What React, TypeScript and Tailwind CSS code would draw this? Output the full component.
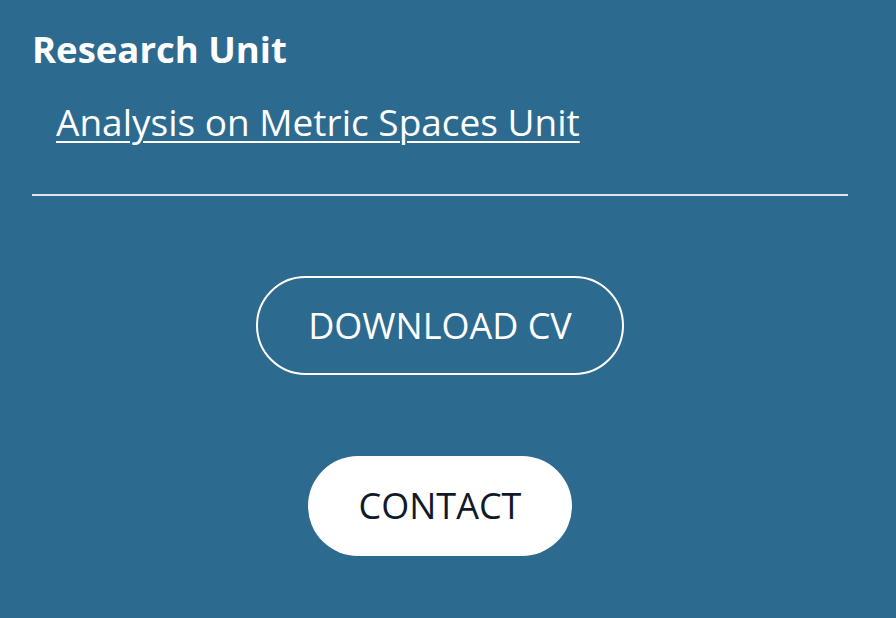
import React from 'react';

export default function App() {
  return (
    <div className="min-h-screen w-full bg-[#2d6a8f] text-white font-['Open_Sans',_'Noto_Sans',_sans-serif]">
      <div className="pl-[32px] pr-[48px] pt-[29px]">
        {/* Research unit */}
        <h3 className="text-[36.5px] leading-[40px] font-bold">Research Unit</h3>
        <div className="mt-[29px] pl-[24px]">
          <a href="#" className="text-[37px] leading-[48px] underline underline-offset-[5px] decoration-[2px]">
            Analysis on Metric Spaces Unit
          </a>
        </div>
        <hr className="mt-[48px] border-0 h-[2px] bg-[#dfe4e8]" />

        {/* Actions */}
        <div className="mt-[80px] flex flex-col items-center gap-[81px]">
          <a
            href="#"
            className="h-[99px] flex items-center px-[50px] rounded-full border-2 border-white text-[36px] leading-[44px] text-white"
          >
            DOWNLOAD CV
          </a>
          <a
            href="#"
            className="h-[100px] flex items-center px-[51px] rounded-full bg-white text-[36px] leading-[44px] text-[#111827]"
          >
            CONTACT
          </a>
        </div>
      </div>
    </div>
  );
}
